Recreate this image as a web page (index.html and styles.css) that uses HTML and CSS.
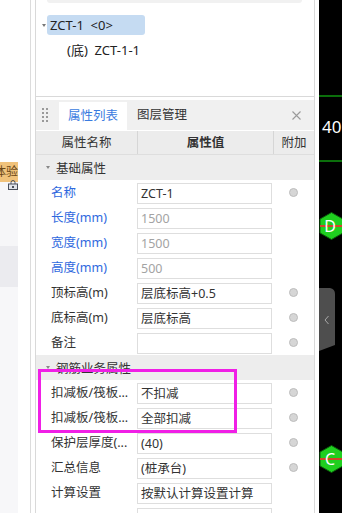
FILE: index.html
```html
<!DOCTYPE html>
<html lang="zh-CN">
<head>
    <meta charset="UTF-8">
    <title>属性列表</title>
    <link rel="stylesheet" href="styles.css">
</head>
<body>
    <div class="screen">
        <!-- left strip -->
        <div class="side">
            <div class="side-panel">
                <div class="badge"><span>体验</span></div>
                <svg class="lock" width="10" height="10" viewBox="0 0 10 10">
                    <path d="M3 4 V2.5 A2 2 0 0 1 7 2.5 V4" fill="none" stroke="#4a4f5c" stroke-width="1"/>
                    <rect x="0.5" y="4" width="9" height="5.5" fill="#dfe3ea" stroke="#4a4f5c" stroke-width="1"/>
                    <rect x="4" y="6" width="2" height="2" fill="#4a4f5c"/>
                </svg>
                <div class="side-fill light"></div>
                <div class="side-fill dark"></div>
                <div class="side-fill rest"></div>
            </div>
        </div>

        <div class="main">
            <!-- tree panel -->
            <div class="tree-panel">
                <div class="tree-top"></div>
                <div class="tree-node">
                    <span class="caret"></span>
                    <span class="node-label selected">ZCT-1&nbsp;&nbsp;&lt;0&gt;</span>
                </div>
                <div class="tree-child">(底)&nbsp;&nbsp;ZCT-1-1</div>
            </div>

            <!-- properties panel -->
            <div class="prop-panel">
                <div class="tabs">
                    <div class="handle">
                        <svg width="6" height="14" viewBox="0 0 6 14">
                            <rect x="0" y="0" width="2" height="2" fill="#9a9a9a"/>
                            <rect x="4" y="0" width="2" height="2" fill="#9a9a9a"/>
                            <rect x="0" y="4" width="2" height="2" fill="#9a9a9a"/>
                            <rect x="4" y="4" width="2" height="2" fill="#9a9a9a"/>
                            <rect x="0" y="8" width="2" height="2" fill="#9a9a9a"/>
                            <rect x="4" y="8" width="2" height="2" fill="#9a9a9a"/>
                            <rect x="0" y="12" width="2" height="2" fill="#9a9a9a"/>
                            <rect x="4" y="12" width="2" height="2" fill="#9a9a9a"/>
                        </svg>
                    </div>
                    <div class="tab active">属性列表</div>
                    <div class="tab">图层管理</div>
                    <div class="close">
                        <svg width="9" height="9" viewBox="0 0 9 9">
                            <path d="M0.5 0.5 L8.5 8.5 M8.5 0.5 L0.5 8.5" stroke="#9a9a9a" stroke-width="1.1"/>
                        </svg>
                    </div>
                </div>

                <div class="thead">
                    <div class="th">属性名称</div>
                    <div class="th strong">属性值</div>
                    <div class="th">附加</div>
                </div>

                <div class="group"><span class="caret"></span>基础属性</div>
                <div class="row">
                    <div class="label blue">名称</div>
                    <div class="value">ZCT-1</div>
                    <div class="dot"></div>
                </div>
                <div class="row">
                    <div class="label blue">长度(mm)</div>
                    <div class="value muted">1500</div>
                </div>
                <div class="row">
                    <div class="label blue">宽度(mm)</div>
                    <div class="value muted">1500</div>
                </div>
                <div class="row">
                    <div class="label blue">高度(mm)</div>
                    <div class="value muted">500</div>
                </div>
                <div class="row">
                    <div class="label">顶标高(m)</div>
                    <div class="value">层底标高+0.5</div>
                    <div class="dot"></div>
                </div>
                <div class="row">
                    <div class="label">底标高(m)</div>
                    <div class="value">层底标高</div>
                    <div class="dot"></div>
                </div>
                <div class="row">
                    <div class="label">备注</div>
                    <div class="value"></div>
                    <div class="dot"></div>
                </div>

                <div class="group"><span class="caret"></span>钢筋业务属性</div>
                <div class="row">
                    <div class="label">扣减板/筏板...</div>
                    <div class="value">不扣减</div>
                    <div class="dot"></div>
                </div>
                <div class="row">
                    <div class="label">扣减板/筏板...</div>
                    <div class="value">全部扣减</div>
                    <div class="dot"></div>
                </div>
                <div class="row">
                    <div class="label">保护层厚度(...</div>
                    <div class="value">(40)</div>
                    <div class="dot"></div>
                </div>
                <div class="row">
                    <div class="label">汇总信息</div>
                    <div class="value">(桩承台)</div>
                    <div class="dot"></div>
                </div>
                <div class="row">
                    <div class="label">计算设置</div>
                    <div class="value">按默认计算设置计算</div>
                </div>
                <div class="row">
                    <div class="label"></div>
                    <div class="value"></div>
                </div>
            </div>

            <div class="highlight"></div>
        </div>

        <div class="gap"></div>

        <!-- drawing viewport -->
        <div class="viewport">
            <div class="axis-line first"></div>
            <div class="axis-num">40</div>
            <div class="axis-line second"></div>
            <svg class="marker marker-d" width="25" height="28" viewBox="0 0 25 28">
                <polygon points="12.5,0.5 24,7 24,21 12.5,27.5 1,21 1,7" fill="#1fcf1f" stroke="#0b5e0b" stroke-width="1"/>
                <line x1="1" y1="14" x2="24" y2="14" stroke="#d2452a" stroke-width="2"/>
                <text x="11" y="19.5" text-anchor="middle" font-family="Noto Sans, sans-serif" font-size="16" fill="#ffffff">D</text>
            </svg>
            <svg class="pull-tab" width="16" height="64" viewBox="0 0 16 64">
                <path d="M0 0 H11 Q16 1 16 6 V57 L0 63 Z" fill="#4e4e4e"/>
                <polyline points="9.5,28 6,32 9.5,36" fill="none" stroke="#a8a8a8" stroke-width="1"/>
            </svg>
            <svg class="marker marker-c" width="25" height="28" viewBox="0 0 25 28">
                <polygon points="12.5,0.5 24,7 24,21 12.5,27.5 1,21 1,7" fill="#1fcf1f" stroke="#0b5e0b" stroke-width="1"/>
                <line x1="1" y1="14" x2="24" y2="14" stroke="#d2452a" stroke-width="2"/>
                <text x="11" y="19.5" text-anchor="middle" font-family="Noto Sans, sans-serif" font-size="16" fill="#ffffff">C</text>
            </svg>
        </div>
    </div>
</body>
</html>
```

FILE: styles.css
```css
body {
    margin: 0;
    font-family: "Noto Sans", "Noto Sans CJK SC", sans-serif;
    font-size: 12px;
    color: #333333;
    background-color: #ffffff;
}

.screen {
    display: flex;
    width: 342px;
    height: 513px;
    overflow: hidden;
}

/* Left strip */
.side {
    width: 31px;
    flex-shrink: 0;
    box-sizing: border-box;
    border-right: 1px solid #dcdcdc;
    padding-top: 162px;
}

.side-panel {
    width: 18px;
    height: 100%;
    display: flex;
    flex-direction: column;
    position: relative;
}

.badge {
    height: 20px;
    display: flex;
    justify-content: flex-end;
    overflow: hidden;
    background-color: #f0c27b;
    color: #6a4716;
    line-height: 20px;
    white-space: nowrap;
}

.lock {
    position: absolute;
    left: 8px;
    top: 18px;
}

.side-fill.light {
    height: 64px;
    background-color: #f6f6f8;
}

.side-fill.dark {
    height: 41px;
    background-color: #ebebef;
}

.side-fill.rest {
    flex: 1;
    background-color: #f7f7f9;
}

/* Main column */
.main {
    width: 280px;
    flex-shrink: 0;
    margin-left: 4px;
    box-sizing: border-box;
    border-left: 1px solid #d9d9d9;
    border-right: 1px solid #d9d9d9;
    position: relative;
}

.tree-panel {
    height: 97px;
    box-sizing: border-box;
    border-bottom: 1px solid #d9d9d9;
}

.tree-top {
    height: 3px;
    margin: 0 12px 0 11px;
    background-color: #f1f1f1;
    border-radius: 0 0 8px 8px;
}

.tree-node {
    display: flex;
    align-items: center;
    margin-top: 12px;
    padding-left: 6px;
    height: 20px;
}

.tree-node .caret {
    width: 0;
    height: 0;
    border-left: 2.5px solid transparent;
    border-right: 2.5px solid transparent;
    border-top: 3px solid #777777;
    margin-right: 1px;
}

.node-label {
    font-size: 13px;
    color: #222222;
    line-height: 20px;
}

.node-label.selected {
    width: 95px;
    padding-left: 3px;
    background-color: #c5dbf2;
    border-radius: 3px;
}

.tree-child {
    margin-top: 5px;
    padding-left: 31px;
    font-size: 13px;
    line-height: 20px;
    color: #222222;
}

/* Property panel */
.prop-panel {
    margin-top: 3px;
}

.tabs {
    display: flex;
    height: 30px;
    background-color: #f0f0f0;
}

.handle {
    width: 23px;
    display: flex;
    align-items: center;
    padding-left: 6px;
    box-sizing: border-box;
}

.tab {
    padding: 0 10px;
    line-height: 30px;
    font-size: 12.5px;
    color: #333333;
}

.tab.active {
    width: 68px;
    padding: 0;
    margin-top: 2px;
    line-height: 28px;
    text-align: center;
    background-color: #ffffff;
    color: #3a7be0;
}

.close {
    margin-left: auto;
    width: 22px;
    display: flex;
    align-items: center;
}

.thead {
    display: grid;
    grid-template-columns: 101px 136px 1fr;
    height: 25px;
    box-sizing: border-box;
    border-top: 1px solid #ffffff;
    border-bottom: 1px solid #dedede;
    background-color: #ececec;
}

.th {
    line-height: 23px;
    text-align: center;
    font-size: 12.5px;
}

.th + .th {
    border-left: 1px solid #d6d6d6;
}

.th.strong {
    font-weight: bold;
}

.group {
    display: flex;
    align-items: center;
    height: 25px;
    padding-left: 10px;
    background-color: #ededed;
    font-size: 12.5px;
}

.group .caret {
    width: 0;
    height: 0;
    border-left: 2.5px solid transparent;
    border-right: 2.5px solid transparent;
    border-top: 3px solid #888888;
    margin-right: 6px;
}

.row {
    display: grid;
    grid-template-columns: 101px 136px 1fr;
    height: 25px;
}

.label {
    padding-left: 15px;
    line-height: 25px;
    white-space: nowrap;
    overflow: hidden;
    font-size: 12.5px;
}

.label.blue {
    color: #2e68de;
}

.value {
    width: 135px;
    height: 21px;
    margin-top: 3px;
    box-sizing: border-box;
    border: 1px solid #dedede;
    padding-left: 3px;
    line-height: 19px;
    white-space: nowrap;
    overflow: hidden;
    font-size: 12.5px;
}

.value.muted {
    color: #a3a3a3;
}

.dot {
    width: 9px;
    height: 9px;
    box-sizing: border-box;
    border-radius: 50%;
    background-color: #d6d6d6;
    border: 1px solid #bdbdbd;
    justify-self: center;
    align-self: center;
}

.highlight {
    position: absolute;
    left: 2px;
    top: 369px;
    width: 199px;
    height: 64px;
    box-sizing: border-box;
    border: 3px solid #f01fe6;
}

.gap {
    width: 4px;
    flex-shrink: 0;
}

/* Drawing viewport */
.viewport {
    flex: 1;
    background-color: #000000;
    position: relative;
    overflow: hidden;
}

.axis-line {
    position: absolute;
    left: 0;
    right: 0;
    height: 2px;
    background-color: #0b6e0b;
}

.axis-line.first {
    top: 95px;
}

.axis-line.second {
    top: 160px;
}

.axis-num {
    position: absolute;
    left: 3px;
    top: 116px;
    font-size: 17px;
    line-height: 22px;
    color: #ffffff;
}

.marker {
    position: absolute;
    left: 0;
}

.marker-d {
    top: 212px;
}

.marker-c {
    top: 445px;
}

.pull-tab {
    position: absolute;
    left: 0;
    top: 288px;
}
```
